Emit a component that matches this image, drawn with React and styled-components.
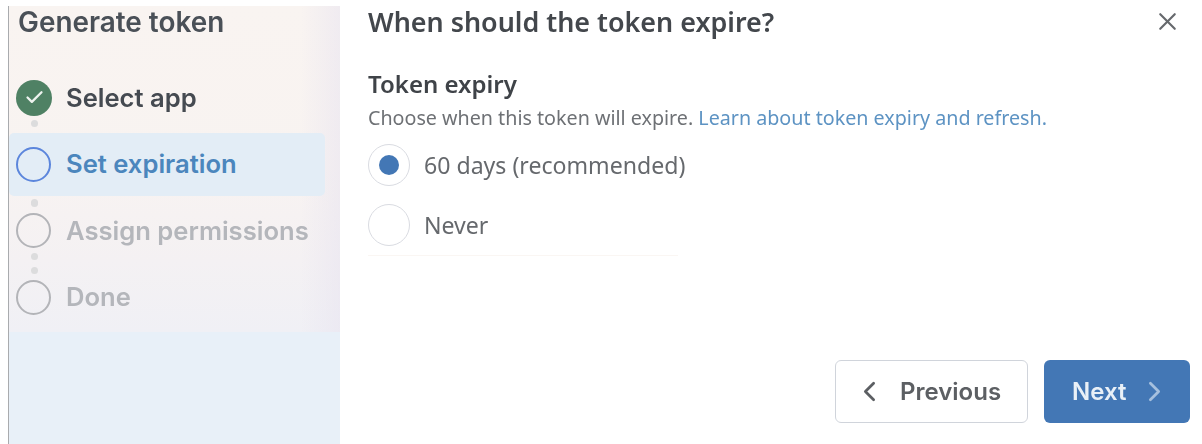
import React from "react";
import styled, { createGlobalStyle } from "styled-components";
import { X, ChevronLeft, ChevronRight, Check } from "lucide-react";

const Global = createGlobalStyle`
  html, body { margin: 0; padding: 0; background: #fff; }
  body { width: 1202px; height: 444px; overflow: hidden; }
  #root { height: 444px; }
`;

const Page = styled.div`
  display: flex;
  width: 1202px;
  height: 444px;
  filter: blur(0.7px);
  font-family: Inter, "Noto Sans", sans-serif;
`;

const Sidebar = styled.aside`
  width: 331px;
  margin: 6px 0 0 8px;
  border-left: 1px solid #a9abae;
  display: flex;
  flex-direction: column;
  background:
    linear-gradient(90deg, rgba(232, 228, 240, 0) 88%, rgba(232, 228, 240, 0.55) 100%),
    linear-gradient(180deg, #f9f4f1 0%, #f8f3f1 50%, #f4f1f3 78%, #f0f0f5 100%);
  background-size: 100% 326px;
  background-repeat: no-repeat;
  background-color: #e8f0f8;
`;

const SideTitle = styled.h2`
  margin: 0;
  height: 60px;
  padding: 1px 0 0 9px;
  box-sizing: border-box;
  font-size: 27.9px;
  line-height: 30px;
  font-weight: 600;
  color: #4a5057;
`;

const Steps = styled.ol`
  list-style: none;
  margin: 0;
  padding: 0;
  display: flex;
  flex-direction: column;
  gap: 3.6px;
`;

const Step = styled.li`
  position: relative;
  display: flex;
  align-items: center;
  gap: 15px;
  width: 316px;
  height: 63px;
  padding-left: 7px;
  box-sizing: border-box;
  border-radius: 5px;
  background: ${(p) => (p.$active ? "#e3edf6" : "transparent")};
  font-weight: 600;
  color: ${(p) => (p.$state === "done" ? "#454a51" : p.$active ? "#4b86bd" : "#b4b6bb")};
`;

const StepLabel = styled.span`
  font-size: 25.6px;
  line-height: 30px;
`;

const Ring = styled.span`
  width: 35px;
  height: 35px;
  box-sizing: border-box;
  border-radius: 50%;
  border: 2.5px solid ${(p) => (p.$active ? "#5c86dc" : "#b3b4b8")};
  flex: none;
`;

const DoneBadge = styled.span`
  width: 36px;
  height: 36px;
  margin-right: -1px;
  border-radius: 50%;
  background: #4f8164;
  color: #eef3ef;
  display: flex;
  align-items: center;
  justify-content: center;
  flex: none;
`;

const Dot = styled.span`
  position: absolute;
  left: 21.5px;
  width: 7px;
  height: 7px;
  border-radius: 50%;
  background: #dcdcdd;
  top: ${(p) => p.$top}px;
`;

const Main = styled.main`
  flex: 1;
  min-width: 0;
  display: flex;
  flex-direction: column;
  padding: 5px 12px 21px 28px;
`;

const Header = styled.header`
  display: flex;
  align-items: center;
  justify-content: space-between;
  height: 33px;
`;

const Title = styled.h1`
  margin: 0;
  font-family: "Noto Sans", sans-serif;
  font-size: 26.9px;
  line-height: 33px;
  font-weight: 600;
  color: #43474c;
`;

const Close = styled.button`
  border: 0;
  padding: 0;
  background: none;
  color: #66696d;
  display: flex;
  margin-right: 8px;
`;

const Section = styled.section`
  margin-top: 31px;
  display: flex;
  flex-direction: column;
`;

const SectionTitle = styled.h3`
  margin: 0;
  font-family: "Noto Sans", sans-serif;
  font-size: 24px;
  line-height: 30px;
  font-weight: 600;
  color: #3f4348;
`;

const Help = styled.p`
  margin: 6px 0 0;
  font-family: "Noto Sans", sans-serif;
  font-size: 19.7px;
  line-height: 26px;
  color: #6e7175;
`;

const HelpLink = styled.a`
  color: #5d93c3;
`;

const Options = styled.div`
  display: flex;
  flex-direction: column;
  gap: 18px;
  margin-top: 13px;
  width: 310px;
  padding-bottom: 9px;
  border-bottom: 1px solid #faf6f3;
`;

const Option = styled.label`
  display: flex;
  align-items: center;
  gap: 14px;
  font-family: "Noto Sans", sans-serif;
  font-size: 23.1px;
  line-height: 42px;
  white-space: nowrap;
  color: #66696d;
`;

const Radio = styled.span`
  width: 42px;
  height: 42px;
  flex: none;
  box-sizing: border-box;
  border-radius: 50%;
  border: 1.5px solid #d9dbe1;
  background: #fff;
  display: flex;
  align-items: center;
  justify-content: center;
  &::after {
    content: "";
    width: 20px;
    height: 20px;
    border-radius: 50%;
    background: ${(p) => (p.$checked ? "#4377b5" : "transparent")};
  }
`;

const Footer = styled.footer`
  margin-top: auto;
  display: flex;
  justify-content: flex-end;
  gap: 16px;
`;

const Button = styled.button`
  height: 63px;
  box-sizing: border-box;
  border-radius: 6px;
  display: flex;
  align-items: center;
  font-family: Inter, "Noto Sans", sans-serif;
  font-size: 24px;
  font-weight: 600;
`;

const PrevButton = styled(Button)`
  width: 193px;
  gap: 14px;
  padding: 0 0 0 17px;
  border: 1.5px solid #d0d4db;
  background: #fff;
  color: #5c5f63;
`;

const NextButton = styled(Button)`
  width: 146px;
  gap: 12px;
  padding: 0 0 0 28px;
  border: 0;
  background: #4377b5;
  color: #e9f0f7;
  svg { color: #a6c0de; }
`;

const steps = [
  { label: "Select app", state: "done", dots: [54] },
  { label: "Set expiration", state: "active", dots: [67] },
  { label: "Assign permissions", state: "todo", dots: [0, 54] },
  { label: "Done", state: "todo", dots: [1] },
];

export default function App() {
  return (
    <>
      <Global />
      <Page>
        <Sidebar>
          <SideTitle>Generate token</SideTitle>
          <Steps>
            {steps.map((s) => (
              <Step key={s.label} $state={s.state} $active={s.state === "active"}>
                {s.state === "done" ? (
                  <DoneBadge>
                    <Check size={21} strokeWidth={2.6} />
                  </DoneBadge>
                ) : (
                  <Ring $active={s.state === "active"} />
                )}
                <StepLabel>{s.label}</StepLabel>
                {s.dots.map((t) => (
                  <Dot key={t} $top={t} />
                ))}
              </Step>
            ))}
          </Steps>
        </Sidebar>
        <Main>
          <Header>
            <Title>When should the token expire?</Title>
            <Close aria-label="Close">
              <X size={29} strokeWidth={1.8} />
            </Close>
          </Header>
          <Section>
            <SectionTitle>Token expiry</SectionTitle>
            <Help>
              Choose when this token will expire.{" "}
              <HelpLink>Learn about token expiry and refresh.</HelpLink>
            </Help>
            <Options>
              <Option>
                <Radio $checked />
                60 days (recommended)
              </Option>
              <Option>
                <Radio />
                Never
              </Option>
            </Options>
          </Section>
          <Footer>
            <PrevButton>
              <ChevronLeft size={33} strokeWidth={2} />
              Previous
            </PrevButton>
            <NextButton>
              Next
              <ChevronRight size={33} strokeWidth={2} />
            </NextButton>
          </Footer>
        </Main>
      </Page>
    </>
  );
}
